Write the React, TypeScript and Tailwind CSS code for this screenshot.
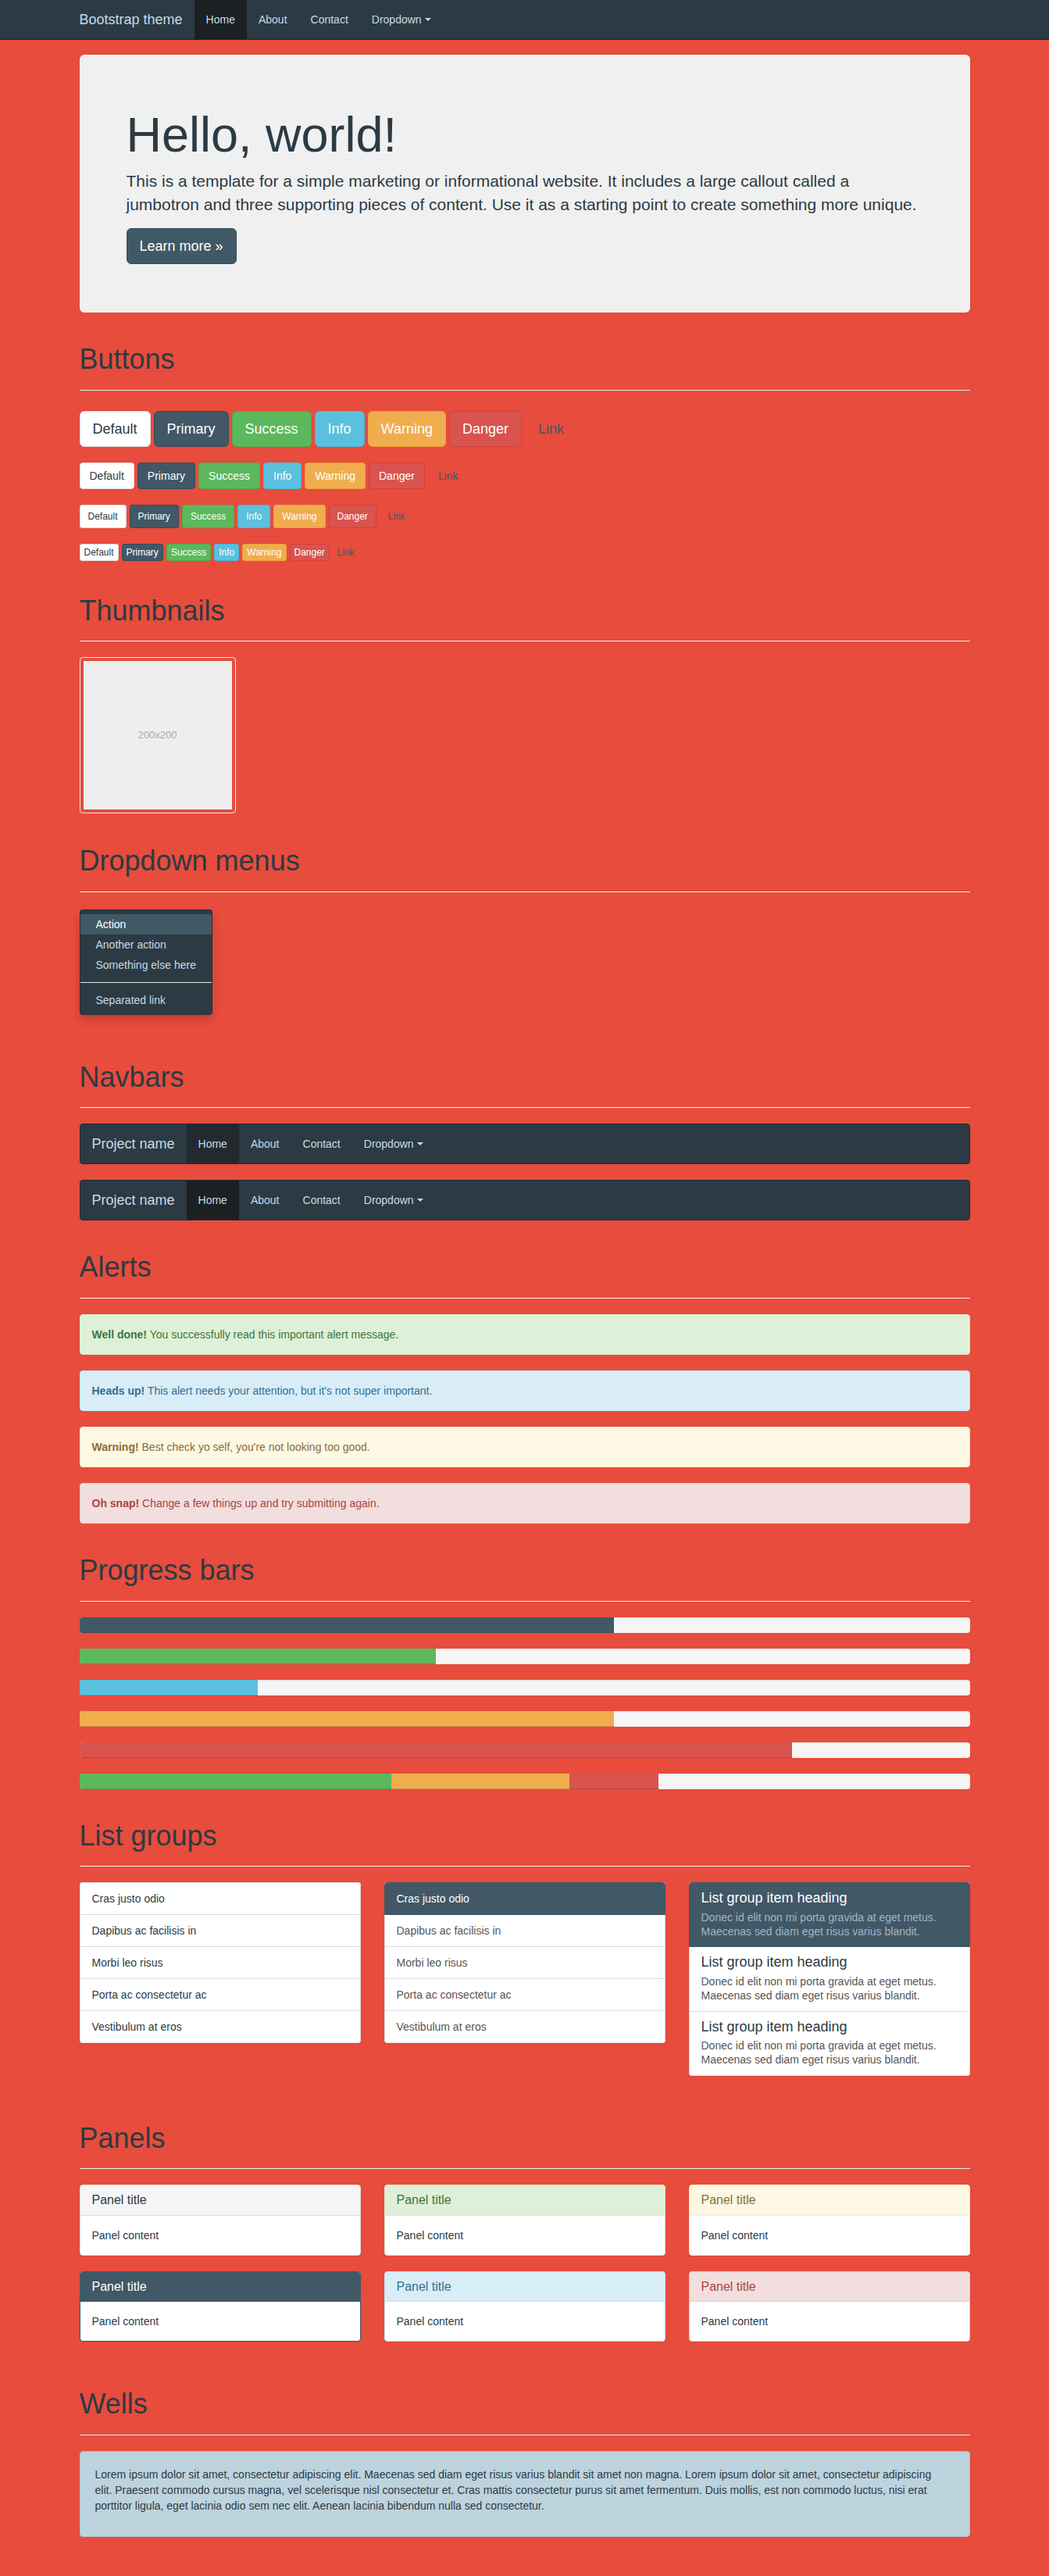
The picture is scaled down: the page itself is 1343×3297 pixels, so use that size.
import React from "react";

const font = { fontFamily: '"Liberation Sans", Arial, Helvetica, sans-serif' };

function PageHeader({ title, mt = "mt-[40px]" }: { title: string; mt?: string }) {
  return (
    <div className={`${mt} mb-[20px] pb-[9px] border-b border-[#eeeeee]`}>
      <h1 className="m-0 mb-[10px] text-[36px] leading-[1.1] font-normal text-[#2c3a44]">{title}</h1>
    </div>
  );
}

type Variant = "default" | "primary" | "success" | "info" | "warning" | "danger" | "link";
type Size = "lg" | "md" | "sm" | "xs";

const variantCls: Record<Variant, string> = {
  default: "bg-white border-[#dddddd] text-[#2c3a44]",
  primary: "bg-[#415866] border-[#37495a] text-white",
  success: "bg-[#5cb85c] border-[#4cae4c] text-white",
  info: "bg-[#5bc0de] border-[#46b8da] text-white",
  warning: "bg-[#f0ad4e] border-[#eea236] text-white",
  danger: "bg-[#d9534f] border-[#d43f3a] text-white",
  link: "bg-transparent border-transparent text-[#415866]",
};

const sizeCls: Record<Size, string> = {
  lg: "h-[46px] px-[16px] text-[18px] leading-[24px] rounded-[6px]",
  md: "h-[34px] px-[12px] text-[14px] leading-[20px] rounded-[4px]",
  sm: "h-[30px] px-[10px] text-[12px] leading-[18px] rounded-[3px]",
  xs: "h-[22px] px-[5px] text-[12px] leading-[18px] rounded-[3px]",
};

function Btn({ v, s, children }: { v: Variant; s: Size; children: React.ReactNode }) {
  return (
    <span className={`inline-flex items-center border ${variantCls[v]} ${sizeCls[s]}`}>{children}</span>
  );
}

function ButtonRow({ s, cls }: { s: Size; cls: string }) {
  const items: [Variant, string][] = [
    ["default", "Default"],
    ["primary", "Primary"],
    ["success", "Success"],
    ["info", "Info"],
    ["warning", "Warning"],
    ["danger", "Danger"],
    ["link", "Link"],
  ];
  return (
    <div className={`flex gap-[4px] ${cls}`}>
      {items.map(([v, t]) => (
        <Btn key={t} v={v} s={s}>
          {t}
        </Btn>
      ))}
    </div>
  );
}

function Caret() {
  return (
    <span className="inline-block ml-[4px] align-middle w-0 h-0 border-t-[4px] border-t-current border-x-[4px] border-x-transparent" />
  );
}

function NavLinks({ activeBg, textCls }: { activeBg: string; textCls: string }) {
  return (
    <div className="flex h-full">
      <div className={`flex items-center px-[15px] ${activeBg} ${textCls}`}>Home</div>
      <div className={`flex items-center px-[15px] ${textCls}`}>About</div>
      <div className={`flex items-center px-[15px] ${textCls}`}>Contact</div>
      <div className={`flex items-center px-[15px] ${textCls}`}>
        Dropdown
        <Caret />
      </div>
    </div>
  );
}

function InlineNavbar({ activeBg }: { activeBg: string }) {
  return (
    <div className="flex h-[52px] bg-[#2c3a44] border border-[#1f2930] rounded-[4px] text-[14px] mb-[20px]">
      <div className="flex items-center pl-[15px] pr-[15px] text-[18px] text-[#c8dbe6]">Project name</div>
      <NavLinks activeBg={activeBg} textCls="text-[#c8dbe6]" />
    </div>
  );
}

function Alert({ bg, border, color, strong, text }: { bg: string; border: string; color: string; strong: string; text: string }) {
  return (
    <div className={`h-[52px] flex items-center px-[15px] border rounded-[4px] text-[14px] mb-[20px] ${bg} ${border} ${color}`}>
      <span>
        <strong className="font-bold">{strong}</strong> {text}
      </span>
    </div>
  );
}

function Progress({ bars }: { bars: { w: number; c: string }[] }) {
  return (
    <div className="h-[20px] mb-[20px] bg-[#f5f5f5] rounded-[4px] overflow-hidden flex shadow-[inset_0_1px_2px_rgba(0,0,0,0.1)]">
      {bars.map((b, i) => (
        <div key={i} className={`h-full ${b.c} shadow-[inset_0_-1px_0_rgba(0,0,0,0.15)]`} style={{ width: `${b.w}%` }} />
      ))}
    </div>
  );
}

function Panel({
  headBg,
  border,
  title,
  headBorder,
}: {
  headBg: string;
  border: string;
  title: string;
  headBorder: string;
}) {
  return (
    <div className={`bg-white border rounded-[4px] mb-[20px] shadow-[0_1px_1px_rgba(0,0,0,0.05)] ${border}`}>
      <div className={`px-[15px] py-[10px] border-b rounded-t-[3px] ${headBg} ${headBorder}`}>
        <h3 className="m-0 text-[16px] leading-[1.1] font-normal">{title}</h3>
      </div>
      <div className="p-[15px] text-[14px] leading-[20px] text-[#2c3a44]">Panel content</div>
    </div>
  );
}

export default function App() {
  const listItems = ["Cras justo odio", "Dapibus ac facilisis in", "Morbi leo risus", "Porta ac consectetur ac", "Vestibulum at eros"];
  return (
    <div className="min-h-[3297px] bg-[#e74c3c] text-[#2c3a44] text-[14px] leading-[20px]" style={font}>
      {/* Top navbar */}
      <div className="h-[51px] bg-[#2c3a44] border-b border-[#1b2227]">
        <div className="w-[1140px] mx-auto flex h-[50px] text-[14px]">
          <div className="flex items-center pr-[15px] text-[18px] text-[#c8dbe6]">Bootstrap theme</div>
          <NavLinks activeBg="bg-[#1b2023]" textCls="text-[#c8dbe6]" />
        </div>
      </div>

      <div className="w-[1140px] mx-auto flex flex-col pt-[19px] pb-[30px]">
        {/* Jumbotron */}
        <div className="bg-[#f0f0f0] rounded-[6px] px-[60px] pt-[48px] pb-[48px] flex flex-col">
          <h1 className="mt-[20px] mb-[10px] text-[63px] leading-[69px] font-normal text-[#2c3a44]">Hello, world!</h1>
          <p className="m-0 mb-[15px] text-[21px] leading-[30px] text-[#2c3a44]">
            This is a template for a simple marketing or informational website. It includes a large callout called a
            jumbotron and three supporting pieces of content. Use it as a starting point to create something more unique.
          </p>
          <div className="flex mb-[14px]">
            <span className="inline-flex items-center h-[46px] px-[16px] text-[18px] rounded-[6px] bg-[#415866] border border-[#37495a] text-white">
              Learn more »
            </span>
          </div>
        </div>

        {/* Buttons */}
        <PageHeader title="Buttons" />
        <div className="flex flex-col mb-[4px]">
          <ButtonRow s="lg" cls="mt-[6px]" />
          <ButtonRow s="md" cls="mt-[20px]" />
          <ButtonRow s="sm" cls="mt-[20px]" />
          <ButtonRow s="xs" cls="mt-[20px]" />
        </div>

        {/* Thumbnails */}
        <PageHeader title="Thumbnails" />
        <div className="flex mb-[1px]">
          <div className="w-[200px] h-[200px] p-[4px] border border-[#e8e8e8] rounded-[4px]">
            <div className="w-[190px] h-[190px] bg-[#eeeeee] flex items-center justify-center text-[13px] text-[#aaaaaa]">
              200x200
            </div>
          </div>
        </div>

        {/* Dropdown menus */}
        <PageHeader title="Dropdown menus" />
        <div className="flex mb-[20px]">
          <div className="mt-[2px] min-w-[160px] bg-[#2c3a44] border border-[rgba(0,0,0,0.15)] rounded-[4px] py-[5px] shadow-[0_6px_12px_rgba(0,0,0,0.175)] text-[14px] leading-[20px]">
            <div className="px-[20px] py-[3px] bg-[#415866] text-white">Action</div>
            <div className="px-[20px] py-[3px] text-[#c8dbe6]">Another action</div>
            <div className="px-[20px] py-[3px] text-[#c8dbe6] whitespace-nowrap">Something else here</div>
            <div className="my-[9px] h-px bg-[#e5e5e5]" />
            <div className="px-[20px] py-[3px] text-[#c8dbe6]">Separated link</div>
          </div>
        </div>

        {/* Navbars */}
        <PageHeader title="Navbars" />
        <div className="flex flex-col">
          <InlineNavbar activeBg="bg-[#222a30]" />
          <div className="-mb-[20px]">
            <InlineNavbar activeBg="bg-[#1b2023]" />
          </div>
        </div>

        {/* Alerts */}
        <PageHeader title="Alerts" />
        <div className="flex flex-col -mb-[20px]">
          <Alert bg="bg-[#dff0d8]" border="border-[#d6e9c6]" color="text-[#3c763d]" strong="Well done!" text="You successfully read this important alert message." />
          <Alert bg="bg-[#d9edf7]" border="border-[#bce8f1]" color="text-[#31708f]" strong="Heads up!" text="This alert needs your attention, but it's not super important." />
          <Alert bg="bg-[#fcf8e3]" border="border-[#faebcc]" color="text-[#8a6d3b]" strong="Warning!" text="Best check yo self, you're not looking too good." />
          <Alert bg="bg-[#f2dede]" border="border-[#ebccd1]" color="text-[#a94442]" strong="Oh snap!" text="Change a few things up and try submitting again." />
        </div>

        {/* Progress bars */}
        <PageHeader title="Progress bars" />
        <div className="flex flex-col -mb-[20px]">
          <Progress bars={[{ w: 60, c: "bg-[#415866]" }]} />
          <Progress bars={[{ w: 40, c: "bg-[#5cb85c]" }]} />
          <Progress bars={[{ w: 20, c: "bg-[#5bc0de]" }]} />
          <Progress bars={[{ w: 60, c: "bg-[#f0ad4e]" }]} />
          <Progress bars={[{ w: 80, c: "bg-[#d9534f]" }]} />
          <Progress
            bars={[
              { w: 35, c: "bg-[#5cb85c]" },
              { w: 20, c: "bg-[#f0ad4e]" },
              { w: 10, c: "bg-[#d9534f]" },
            ]}
          />
        </div>

        {/* List groups */}
        <PageHeader title="List groups" />
        <div className="grid grid-cols-3 gap-x-[30px] items-start mb-[20px]">
          <div className="flex flex-col bg-white rounded-[4px] shadow-[0_1px_2px_rgba(0,0,0,0.075)]">
            {listItems.map((t, i) => (
              <div
                key={t}
                className={`px-[15px] py-[10px] border border-[#dddddd] text-[#2c3a44] ${i > 0 ? "-mt-px" : "rounded-t-[4px]"} ${i === listItems.length - 1 ? "rounded-b-[4px]" : ""}`}
              >
                {t}
              </div>
            ))}
          </div>
          <div className="flex flex-col bg-white rounded-[4px] shadow-[0_1px_2px_rgba(0,0,0,0.075)]">
            {listItems.map((t, i) => (
              <div
                key={t}
                className={`px-[15px] py-[10px] border ${i === 0 ? "bg-[#415866] border-[#415866] text-white rounded-t-[4px] relative" : "-mt-px border-[#dddddd] text-[#555555]"} ${i === listItems.length - 1 ? "rounded-b-[4px]" : ""}`}
              >
                {t}
              </div>
            ))}
          </div>
          <div className="flex flex-col bg-white rounded-[4px] shadow-[0_1px_2px_rgba(0,0,0,0.075)]">
            {[0, 1, 2].map((i) => (
              <div
                key={i}
                className={`px-[15px] py-[10px] border ${i === 0 ? "bg-[#415866] border-[#415866] rounded-t-[4px] relative" : "-mt-px border-[#dddddd]"} ${i === 2 ? "rounded-b-[4px]" : ""}`}
              >
                <h4 className={`m-0 mb-[5px] text-[18px] leading-[1.1] font-normal ${i === 0 ? "text-white" : "text-[#2c3a44]"}`}>
                  List group item heading
                </h4>
                <p className={`m-0 text-[14px] leading-[1.3] ${i === 0 ? "text-[#a3b6c4]" : "text-[#555555]"}`}>
                  Donec id elit non mi porta gravida at eget metus. Maecenas sed diam eget risus varius blandit.
                </p>
              </div>
            ))}
          </div>
        </div>

        {/* Panels */}
        <PageHeader title="Panels" />
        <div className="grid grid-cols-3 gap-x-[30px]">
          <Panel headBg="bg-[#f5f5f5] text-[#2c3a44]" headBorder="border-[#dddddd]" border="border-[#dddddd]" title="Panel title" />
          <Panel headBg="bg-[#dff0d8] text-[#3c763d]" headBorder="border-[#d6e9c6]" border="border-[#d6e9c6]" title="Panel title" />
          <Panel headBg="bg-[#fcf8e3] text-[#8a6d3b]" headBorder="border-[#faebcc]" border="border-[#faebcc]" title="Panel title" />
          <Panel headBg="bg-[#415866] text-white" headBorder="border-[#415866]" border="border-[#415866]" title="Panel title" />
          <Panel headBg="bg-[#d9edf7] text-[#31708f]" headBorder="border-[#bce8f1]" border="border-[#bce8f1]" title="Panel title" />
          <Panel headBg="bg-[#f2dede] text-[#a94442]" headBorder="border-[#ebccd1]" border="border-[#ebccd1]" title="Panel title" />
        </div>

        {/* Wells */}
        <PageHeader title="Wells" />
        <div className="bg-[#bdd3dd] border border-[#a9c2ce] rounded-[4px] p-[19px] mb-[20px] shadow-[inset_0_1px_1px_rgba(0,0,0,0.05)]">
          <p className="m-0 mb-[10px] max-w-[1080px] text-[14px] leading-[20px] text-[#2c3a44]">
            Lorem ipsum dolor sit amet, consectetur adipiscing elit. Maecenas sed diam eget risus varius blandit sit amet non
            magna. Lorem ipsum dolor sit amet, consectetur adipiscing elit. Praesent commodo cursus magna, vel scelerisque nisl
            consectetur et. Cras mattis consectetur purus sit amet fermentum. Duis mollis, est non commodo luctus, nisi erat
            porttitor ligula, eget lacinia odio sem nec elit. Aenean lacinia bibendum nulla sed consectetur.
          </p>
        </div>
      </div>
    </div>
  );
}
